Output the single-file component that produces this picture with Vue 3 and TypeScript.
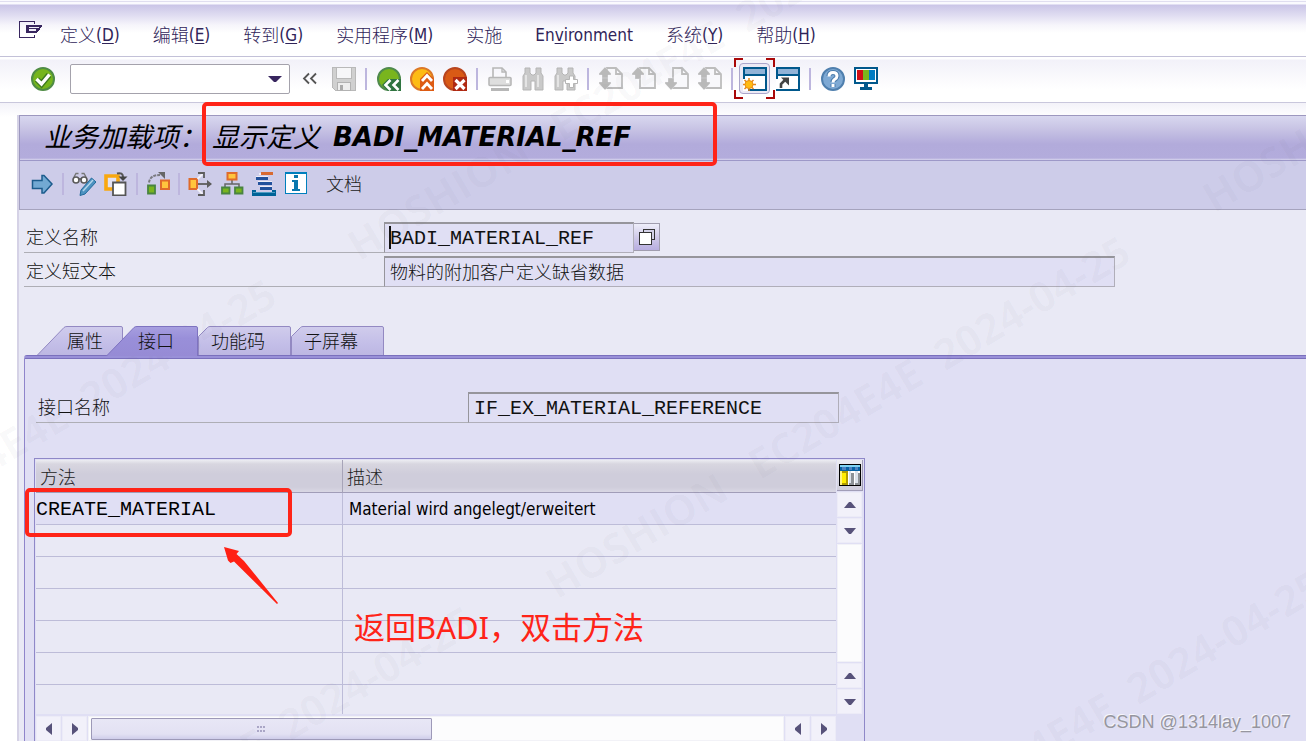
<script setup lang="ts">
interface MenuEntry { cn: string; pre?: string; key?: string; post?: string }
interface Method { name: string; text: string }
interface Stamp { x: number; y: number }

const menus: MenuEntry[] = [
  { cn: '定义', pre: '(', key: 'D', post: ')' },
  { cn: '编辑', pre: '(', key: 'E', post: ')' },
  { cn: '转到', pre: '(', key: 'G', post: ')' },
  { cn: '实用程序', pre: '(', key: 'M', post: ')' },
  { cn: '实施' },
  { cn: '', pre: 'En', key: 'v', post: 'ironment' },
  { cn: '系统', pre: '(', key: 'Y', post: ')' },
  { cn: '帮助', pre: '(', key: 'H', post: ')' },
]

const tabs = [
  { label: '属性', kind: 'first', shape: 'M0.5 30 L28 1.5 Q29 0.5 31 0.5 H85 Q86.5 0.5 86.5 2 V30' },
  { label: '接口', kind: 'active', shape: 'M0.5 30 L28 1.5 Q29 0.5 31 0.5 H90 Q91.5 0.5 91.5 2 V30' },
  { label: '功能码', kind: 'plain', shape: 'M0.5 30 V10.5 L9.5 1.5 Q10.5 0.5 12 0.5 H91 Q92.5 0.5 92.5 2 V30' },
  { label: '子屏幕', kind: 'plain', shape: 'M0.5 30 V10.5 L9.5 1.5 Q10.5 0.5 12 0.5 H91 Q92.5 0.5 92.5 2 V30' },
]

const rows: Method[] = [
  { name: 'CREATE_MATERIAL', text: 'Material wird angelegt/erweitert' },
  ...Array.from({ length: 6 }, () => ({ name: '', text: '' })),
]

const stamps: Stamp[] = [
  { x: 359, y: 262 },
  { x: 557, y: 600 },
  { x: 1214, y: 214 },
  { x: -297, y: 643 },
  { x: -98, y: 970 },
  { x: 750, y: 934 },
]
const pages = [
  { label: '第一页', up: true, down: true },
  { label: '上一页', up: true, down: false },
  { label: '下一页', up: false, down: true },
  { label: '最后一页', up: true, down: true },
]
</script>

<template>
  <div class="app">
    <nav class="menubar">
      <button class="sysmenu" aria-label="系统菜单">
        <svg width="24" height="18" viewBox="0 0 24 18" shape-rendering="crispEdges">
          <path d="M0 0H16V3H15V1H1V16H15V14H16V17H0Z" fill="#38265f" />
          <path d="M7 4H23V5L21 7V8L17 12H7Z" fill="#38265f" />
          <path d="M10 6H20V7H10ZM10 8H17V10H10Z" fill="#efeef8" />
        </svg>
      </button>
      <button v-for="m in menus" :key="m.cn" class="menu">{{ m.cn }}<span v-if="m.key" class="latin">{{ m.pre }}<u>{{ m.key }}</u>{{ m.post }}</span></button>
    </nav>

    <div class="toolbar">
      <button class="tool" aria-label="回车">
        <svg width="24" height="24" viewBox="0 0 24 24">
          <circle cx="12" cy="12" r="11" fill="#75b51d" stroke="#4f8c45" stroke-width="2" />
          <path d="M6 12.500L10.500 17L18 8" fill="none" stroke="#3d7820" stroke-width="6" />
          <path d="M5.500 12L10.500 17L18.500 7.500" fill="none" stroke="#fff" stroke-width="3.400" />
        </svg>
      </button>
      <div class="command">
        <input type="text" aria-label="命令" />
        <button aria-label="命令历史"><svg width="14" height="8" viewBox="0 0 14 8"><path d="M0 1H14L8 7H6Z" fill="#38265f" /></svg></button>
      </div>
      <button class="tool" aria-label="折叠">
        <svg width="24" height="24" viewBox="0 0 24 24" fill="none" stroke="#555" stroke-width="1.800"><path d="M10 6.500L5 11.500L10 16.500M17 6.500L12 11.500L17 16.500" /></svg>
      </button>
      <button class="tool" aria-label="保存">
        <svg width="24" height="24" viewBox="0 0 24 24" shape-rendering="crispEdges">
          <path d="M0 0H24V24H3L0 21Z" fill="#b9b9b9" /><path d="M1 1H4V12H20V1H23V23H3L1 21Z" fill="#d0d0d0" />
          <path d="M5 1H19V11H5Z" fill="#f6f6f8" /><path d="M5 15H19V24H5Z" fill="#b2b2b2" /><path d="M6 16H18V23H6Z" fill="#eee" /><path d="M8 18H11V23H8Z" fill="#aaa" />
        </svg>
      </button>
      <span class="sep"></span>
      <button class="tool" aria-label="后退">
        <svg width="24" height="24" viewBox="0 0 24 24">
          <circle cx="12" cy="12" r="11" fill="#79b51e" stroke="#4f8a4d" stroke-width="2" />
          <path d="M5 18L11 12H24V24H11Z" fill="#2f7440" />
          <path d="M13.500 13L8.500 18L13.500 23M21.500 13L16.500 18L21.500 23" fill="none" stroke="#fff" stroke-width="2.600" />
        </svg>
      </button>
      <button class="tool" aria-label="退出">
        <svg width="24" height="24" viewBox="0 0 24 24">
          <circle cx="12" cy="12" r="11" fill="#fdbb14" stroke="#dc7828" stroke-width="2" />
          <path d="M10 12L17 5L24 12V24H10Z" fill="#dd5b13" />
          <path d="M12 14L17 8.500L22 14M12 22L17 16.500L22 22" fill="none" stroke="#fff" stroke-width="2.800" />
        </svg>
      </button>
      <button class="tool" aria-label="取消">
        <svg width="24" height="24" viewBox="0 0 24 24">
          <circle cx="12" cy="12" r="11" fill="#d95a15" stroke="#b8451f" stroke-width="2" />
          <path d="M10 10H24V24H10Z" fill="#af2912" />
          <path d="M12.500 13L21.500 22M21.500 13L12.500 22" fill="none" stroke="#fff" stroke-width="3.200" />
        </svg>
      </button>
      <span class="sep"></span>
      <button class="tool" aria-label="打印" disabled>
        <svg width="24" height="24" viewBox="0 0 24 24" fill="none" stroke="#b7b7b7">
          <path d="M5 10V1H14L18 5V10" stroke-width="1.600" /><path d="M14 1V5H18" stroke-width="1.400" />
          <rect x="1" y="10.500" width="22" height="8" rx="1" fill="#dedede" stroke-width="1.600" />
          <path d="M18 13h3v3h-3z" fill="#fff" stroke="none" /><path d="M3 22.500H21" stroke-width="3" />
        </svg>
      </button>
      <button class="tool" aria-label="查找" disabled>
        <svg width="24" height="24" viewBox="0 0 24 24">
          <path d="M4 1H9V6L11 8H13L15 6V1H20V6L22 9V23H14V14H10V23H2V9L4 6Z" fill="#c9c9c9" stroke="#b5b5b5" />
          <path d="M5 8V20M17 8V20" stroke="#e4e4e4" stroke-width="2" />
        </svg>
      </button>
      <button class="tool" aria-label="查找下一个" disabled>
        <svg width="24" height="24" viewBox="0 0 24 24">
          <path d="M3 1H8V6L10 8H12L14 6V1H19V6L21 9V23H13V14H9V23H1V9L3 6Z" fill="#c9c9c9" stroke="#b5b5b5" />
          <path d="M4 8V20" stroke="#e4e4e4" stroke-width="2" />
          <path d="M15.500 9H19.500V12.500H23.500V16.500H19.500V20.500H15.500V16.500H11.500V12.500H15.500Z" fill="#fff" stroke="#b5b5b5" />
        </svg>
      </button>
      <span class="sep"></span>
      <button v-for="p in pages" :key="p.label" class="tool" :aria-label="p.label" disabled>
        <svg width="24" height="24" viewBox="0 0 24 24">
          <path d="M8 1H17L23 7V21H8Z" fill="#f8f8fb" stroke="#bdbdbd" stroke-width="1.800" />
          <path d="M17 1V7H23" fill="none" stroke="#bdbdbd" stroke-width="1.800" />
          <path v-if="p.up" d="M0 6.500L6 0L12 6.500V8H9V12H3V8H0Z" fill="#b9b9b9" stroke="#f8f8fb" stroke-width=".3" />
          <path v-if="p.down" d="M0 16.500L6 23L12 16.500V15H9V11H3V15H0Z" fill="#b9b9b9" stroke="#f8f8fb" stroke-width=".3" />
        </svg>
      </button>
      <span class="sep"></span>
      <button class="tool focus" aria-label="创建新会话">
        <svg class="corners" width="41" height="41" viewBox="0 0 41 41" fill="none" stroke="#a90808" stroke-width="2"><path d="M9 1H1V9M32 1H40V9M1 32V40H9M40 32V40H32" /></svg>
        <span class="plate">
          <svg width="24" height="24" viewBox="0 0 24 24">
            <rect x="1" y="1" width="22" height="22" fill="#fff" stroke="#00588c" stroke-width="2" /><path d="M2 2H22V7H2Z" fill="#91b3d7" /><path d="M1 8H23" stroke="#00588c" stroke-width="2" />
            <path d="M0 12H5V24H0Z" fill="#fff" /><path d="M6 11V24M0 17.500H13M1.500 13L10.500 22M10.500 13L1.500 22" stroke="#e4851b" stroke-width="1.500" /><circle cx="6" cy="17.500" r="4" fill="#ffbb13" stroke="#ea8d12" />
          </svg>
        </span>
      </button>
      <button class="tool" aria-label="创建快捷方式">
        <svg width="24" height="24" viewBox="0 0 24 24">
          <rect x="1" y="1" width="22" height="22" fill="#fff" stroke="#00588c" stroke-width="2" /><path d="M2 2H22V7H2Z" fill="#91b3d7" /><path d="M1 8H23" stroke="#00588c" stroke-width="2" />
          <path d="M0 12H4V22H0Z" fill="#fff" /><path d="M5 21V17L9 13" fill="none" stroke="#444" stroke-width="2.600" /><path d="M5 10.500H13V18.500Z" fill="#444" />
        </svg>
      </button>
      <span class="sep"></span>
      <button class="tool" aria-label="帮助">
        <svg width="24" height="24" viewBox="0 0 24 24">
          <circle cx="12" cy="12" r="11" fill="#7ea9d4" stroke="#4f7fae" stroke-width="2" />
          <path d="M8 9Q8 5.500 12 5.500T16 9Q16 11 13.500 12.500Q12 13.500 12 15M12 17V20" fill="none" stroke="#4a7bab" stroke-width="5" />
          <path d="M8 9.500Q8 5.500 12 5.500T16 9Q16 11 13.500 12.500Q12 13.500 12 15.500M12 17V20" fill="none" stroke="#fff" stroke-width="3" />
        </svg>
      </button>
      <button class="tool" aria-label="定制本地布局">
        <svg width="24" height="24" viewBox="0 0 24 24" shape-rendering="crispEdges">
          <path d="M0 0H24V17H0Z" fill="#00588c" /><path d="M2 2H22V15H2Z" fill="#fff" />
          <path d="M3 3H9V13H3Z" fill="#cf0d16" /><path d="M9 3H15V13H9Z" fill="#7ab51d" /><path d="M15 3H21V13H15Z" fill="#007cc3" />
          <path d="M10 17H14V20H18V23H6V20H10Z" fill="#00588c" />
        </svg>
      </button>
    </div>

    <div class="workspace">
      <main class="window">
        <h1 class="title">业务加载项：<span class="gap"></span>显示定义<b>BADI_MATERIAL_REF</b></h1>

        <div class="appbar">
          <button class="act" aria-label="其他对象">
            <svg width="24" height="24" viewBox="0 0 24 24"><path d="M2.500 8.500H12V3.500H14L22 12L14 21H12V16.500H2.500Z" fill="#72a9d3" stroke="#1c5c8d" stroke-width="1.500" /></svg>
          </button>
          <span class="sep"></span>
          <button class="act" aria-label="显示/更改">
            <svg width="24" height="24" viewBox="0 0 24 24" fill="none">
              <path d="M2 5L4 1.500H6.500M14 5L12 1.500H9.500" stroke="#777" stroke-width="1.400" />
              <circle cx="4" cy="8" r="3" fill="#fff" stroke="#5a5a5a" stroke-width="1.600" /><circle cx="12" cy="8" r="3" fill="#fff" stroke="#5a5a5a" stroke-width="1.600" />
              <path d="M6.500 7H9.500" stroke="#5a5a5a" stroke-width="1.600" />
              <path d="M8 23.500L9 18L19.500 6L24 10L13 22Z" fill="#4d92c0" stroke="#216b9b" /><path d="M11 19L21 8" stroke="#b3d5ea" stroke-width="1.500" />
            </svg>
          </button>
          <button class="act" aria-label="复制">
            <svg width="24" height="24" viewBox="0 0 24 24">
              <path d="M2 4H14V17H2Z" fill="#e4e2f2" stroke="#f9a80f" stroke-width="3.600" />
              <path d="M9 10.500H21.500V23.500H9Z" fill="#fff" stroke="#555" stroke-width="1.800" />
              <path d="M13 1.500Q19 0 19 5" fill="none" stroke="#555" stroke-width="2" /><path d="M14.500 4.500H23.500L19 9Z" fill="#444" />
            </svg>
          </button>
          <span class="sep"></span>
          <button class="act" aria-label="使用处">
            <svg width="24" height="24" viewBox="0 0 24 24">
              <path d="M2 13.500H9V21.500H2Z" fill="#79b51e" stroke="#498441" stroke-width="1.800" /><path d="M15 8.500H23V17H15Z" fill="#ffc53d" stroke="#df6b2b" stroke-width="2" />
              <path d="M3 10.500Q4 3 14 3" fill="none" stroke="#7a7a80" stroke-width="2" stroke-dasharray="3 1" /><path d="M12 0H19V7L17 5L15 3Z" fill="#666" />
            </svg>
          </button>
          <span class="sep"></span>
          <button class="act" aria-label="实施">
            <svg width="24" height="24" viewBox="0 0 24 24">
              <path d="M1.500 7H9V17H1.500Z" fill="#ffc53d" stroke="#df6b2b" stroke-width="2" />
              <path d="M10 12H23" stroke="#5d5d5d" stroke-width="1.800" /><path d="M19 8L24 12L19 16Z" fill="#5d5d5d" />
              <path d="M9.500 7L14.500 2M9.500 17L14.500 22" fill="none" stroke="#f2f1f8" stroke-width="2" /><path d="M10 1H16V6M10 23H16V18" fill="none" stroke="#5d5d5d" stroke-width="1.800" />
            </svg>
          </button>
          <button class="act" aria-label="层次">
            <svg width="24" height="24" viewBox="0 0 24 24">
              <path d="M12 8V12M5 16V12H19V16" fill="none" stroke="#666" stroke-width="1.500" /><path d="M7.500 1H16.500V7.500H7.500Z" fill="#ffc53d" stroke="#df6b2b" stroke-width="2" />
              <path d="M2 15.500H9.500V21.500H2ZM15 15.500H22.500V21.500H15Z" fill="#79b51e" stroke="#498441" stroke-width="1.800" />
            </svg>
          </button>
          <button class="act" aria-label="对象列表">
            <svg width="24" height="24" viewBox="0 0 24 24" shape-rendering="crispEdges">
              <path d="M7 1H9V3H7ZM4 4H16V5H4ZM6 9H20V10H6ZM8 14H20V15H8Z" fill="#efedf7" />
              <path d="M9 0H21V3H9Z" fill="#d86a32" /><path d="M4 5H16V8H4ZM6 10H20V13H6ZM8 15H20V18H8Z" fill="#23519c" />
              <path d="M0 18H4V20H20V18H24V24H0Z" fill="#006397" /><path d="M1 20H23V21H1Z" fill="#4d9cc3" />
            </svg>
          </button>
          <button class="act" aria-label="信息">
            <svg width="24" height="24" viewBox="0 0 24 24" shape-rendering="crispEdges"><path d="M1 0H23V22H1Z" fill="#007fbd" /><path d="M2 2H22V21H2Z" fill="#fff" /><path d="M10 3H14V6H10ZM8 8H14V17H16V19H8V17H10V10H8Z" fill="#0877ae" /></svg>
          </button>
          <button class="doc">文档</button>
        </div>

        <form class="content" @submit.prevent>
          <div class="field">
            <label for="def-name">定义名称</label>
            <input id="def-name" class="mono name" value="BADI_MATERIAL_REF" readonly />
            <button class="match" type="button" aria-label="搜索帮助">
              <svg width="18" height="18" viewBox="0 0 18 18" shape-rendering="crispEdges"><path d="M5.500 1.500H16.500V11.500H5.500Z" fill="#d3d1e7" stroke="#333" /><path d="M1.500 4.500H13.500V16.500H1.500Z" fill="#fff" stroke="#333" /></svg>
            </button>
            <i class="caret"></i>
          </div>
          <div class="field">
            <label for="def-text">定义短文本</label>
            <input id="def-text" class="text" value="物料的附加客户定义缺省数据" readonly />
          </div>

          <div class="tabs" role="tablist">
            <button v-for="t in tabs" :key="t.label" type="button" role="tab" :aria-selected="t.kind === 'active'" :class="['tab', t.kind]">
              <svg width="93" height="30" viewBox="0 0 93 30">
                <defs>
                  <linearGradient id="tabPlain" x1="0" y1="0" x2="0" y2="1"><stop offset="0" stop-color="#d0ccec" /><stop offset=".55" stop-color="#c4bfe8" /><stop offset="1" stop-color="#bcb6e2" /></linearGradient>
                  <linearGradient id="tabActive" x1="0" y1="0" x2="0" y2="1"><stop offset="0" stop-color="#a79fe0" /><stop offset=".4" stop-color="#998fd9" /><stop offset="1" stop-color="#968bd5" /></linearGradient>
                </defs>
                <path :d="t.shape" :class="['outline', t.kind]" />
              </svg>
              <span>{{ t.label }}</span>
            </button>
          </div>

          <section class="panel">
            <div class="field">
              <label for="if-name" class="wide">接口名称</label>
              <input id="if-name" class="mono iface" value="IF_EX_MATERIAL_REFERENCE" readonly />
            </div>

            <div class="grid">
              <div class="gridmain">
                <table>
                  <colgroup><col class="c1" /><col /></colgroup>
                  <thead><tr><th>方法</th><th>描述</th></tr></thead>
                  <tbody>
                    <tr v-for="(r, i) in rows" :key="i"><td class="mono">{{ r.name }}</td><td class="desc">{{ r.text }}</td></tr>
                  </tbody>
                </table>
                <div class="hscroll">
                  <button type="button" aria-label="向左"><svg width="8" height="12" viewBox="0 0 8 12"><path d="M7 0V12L1 7V5Z" /></svg></button>
                  <button type="button" aria-label="向右"><svg width="8" height="12" viewBox="0 0 8 12"><path d="M1 0V12L7 7V5Z" /></svg></button>
                  <div class="track">
                    <div class="thumb"><svg width="9" height="7" viewBox="0 0 9 7" shape-rendering="crispEdges"><path d="M0 0h2v2h-2zM3 0h2v2h-2zM6 0h2v2h-2zM0 4h2v2h-2zM3 4h2v2h-2zM6 4h2v2h-2z" fill="#aaa6c6" /></svg></div>
                  </div>
                  <button type="button" aria-label="向左翻页"><svg width="8" height="12" viewBox="0 0 8 12"><path d="M7 0V12L1 7V5Z" /></svg></button>
                  <button type="button" aria-label="向右翻页"><svg width="8" height="12" viewBox="0 0 8 12"><path d="M1 0V12L7 7V5Z" /></svg></button>
                </div>
              </div>
              <div class="vscroll">
                <button type="button" class="config" aria-label="表格设置">
                  <svg width="22" height="22" viewBox="0 0 22 22" shape-rendering="crispEdges">
                    <path d="M0 0H22V22H0Z" fill="#000" /><path d="M1 1H21V21H1Z" fill="#fff" /><path d="M1 1H21V3H1Z" fill="#80d3f4" /><path d="M1 3H21V7H1Z" fill="#0863a4" /><path d="M3 3H7V6H3ZM10 3H13V6H10ZM16 3H19V6H16Z" fill="#4e83c1" />
                    <path d="M1 7H9V21H1Z" fill="#b09b00" /><path d="M1 7H3V21H1Z" fill="#fff37e" /><path d="M3 9H7V19H3Z" fill="#ffed00" /><path d="M10 7H12V19H10ZM16 7H19V19H16Z" fill="#dce3eb" /><path d="M12 9H15V21H10V19H12ZM19 9H21V21H16V19H19Z" fill="#8d9296" />
                  </svg>
                </button>
                <button type="button" aria-label="向上"><svg width="14" height="8" viewBox="0 0 14 8"><path d="M1 7H13L8 1H6Z" /></svg></button>
                <button type="button" aria-label="向下"><svg width="14" height="8" viewBox="0 0 14 8"><path d="M1 1H13L8 7H6Z" /></svg></button>
                <div class="track"></div>
                <button type="button" aria-label="向上翻页"><svg width="14" height="8" viewBox="0 0 14 8"><path d="M1 7H13L8 1H6Z" /></svg></button>
                <button type="button" aria-label="向下翻页"><svg width="14" height="8" viewBox="0 0 14 8"><path d="M1 1H13L8 7H6Z" /></svg></button>
              </div>
            </div>
          </section>
        </form>
      </main>
    </div>

    <svg class="stamps" aria-hidden="true">
      <text v-for="s in stamps" :key="s.x" :transform="`translate(${s.x} ${s.y}) rotate(-30.5)`">HOSHION&nbsp;&nbsp; EC204E4E&nbsp; 2024-04-25</text>
    </svg>
    <div class="mark mark-title"></div>
    <div class="mark mark-row"></div>
    <svg class="pointer" width="56" height="60" viewBox="0 0 56 60"><path d="M0 0L15 4L12.500 7L20 14L54 56L53 57L10 14.500L6.500 16L4 13.500Z" fill="#ff2013" /></svg>
    <p class="note">返回BADI，双击方法</p>
    <p class="credit">CSDN @1314lay_1007</p>
  </div>
</template>

<style>
body {
  margin: 0;
}
</style>

<style scoped>
.app {
  position: relative;
  display: flex;
  flex-direction: column;
  height: 100vh;
  overflow: hidden;
  box-sizing: border-box;
  background: #fff;
  color: #111;
  font: 18px/24px "Noto Sans", "Noto Sans CJK SC", sans-serif;
}
.app *, .app *::before { box-sizing: border-box; }
button, input { font: inherit; color: inherit; margin: 0; padding: 0; border: 0; background: none; border-radius: 0; outline: 0; }
button { display: flex; align-items: center; justify-content: center; white-space: pre; }
svg { display: block; flex: none; }

.menubar {
  display: flex;
  align-items: center;
  gap: 33px;
  flex: none;
  height: 57px;
  padding: 12px 0 0 19px;
  border-top: 1px solid #fafafe;
  border-bottom: 1px solid #c3c1d8;
  background: linear-gradient(#e0def0 0 1px, #fafafe 1px 3px, #cac5e7 4px, #dfdcf1 14px, #f6f5fb 24px, #fff 32px);
  color: #302459;
}
.sysmenu { margin: -10px -16px 0 0; }
.menu { font-weight: 300; }
.latin { font: 400 17px/24px "DejaVu Sans Condensed", "DejaVu Sans", sans-serif; }
u { text-underline-offset: 2px; }

.toolbar {
  display: flex;
  align-items: center;
  flex: none;
  height: 46px;
  padding: 0 0 2px 26px;
  border-bottom: 1px solid #c9c7dc;
  background: linear-gradient(#fff 0 2px, #f2f1f9 3px, #fff 32px);
}
.tool { position: relative; width: 33px; height: 33px; }
.sep { width: 12px; height: 22px; display: flex; justify-content: center; }
.sep::before { content: ""; width: 2px; background: #bdb6de; }
.command { display: flex; width: 220px; height: 30px; margin: 1px 4px 0 11px; border: 1px solid #a4a2ac; border-radius: 2px; background: #fff; }
.command input { flex: 1; min-width: 0; padding: 0 6px; }
.command button { width: 29px; }
.plate { display: flex; align-items: center; justify-content: center; width: 31px; height: 31px; flex: none; border: 1px solid #aaa6cb; border-radius: 4px; background: #eceaf5; }
.corners { position: absolute; left: -4px; top: -4px; }

.workspace {
  display: flex;
  flex: 1;
  min-height: 0;
  padding: 12px 0 0 17px;
  background: linear-gradient(#f3f2f9, #fff 14px);
}
.window {
  display: flex;
  flex-direction: column;
  flex: 1;
  min-width: 0;
  border-left: 2px solid #d5d2e6;
  background: #e9e9f5;
}
.title {
  display: flex;
  align-items: center;
  flex: none;
  height: 46px;
  margin: 0;
  padding: 0 0 2px 24px;
  border: 1px solid #9d98bf;
  border-right: 0;
  border-bottom-color: #9d98c8;
  background: linear-gradient(#d8d7ef, #c9c5e5 12px, #b2abdb 28px, #b3acdc 42px, #d8d6ee 44px);
  color: #000;
  font: italic 400 27px/32px "Noto Sans", "Noto Sans CJK SC", sans-serif;
  white-space: pre;
}
.title b { margin-left: 13px; font: italic 700 26px/32px "DejaVu Sans", sans-serif; }
.gap { width: 6px; }
.appbar {
  display: flex;
  align-items: center;
  flex: none;
  height: 49px;
  padding: 0 0 2px 6px;
  border-left: 1px solid #a5a1c3;
  border-bottom: 1px solid #a5a3bd;
  background: #cdcce9;
}
.act { width: 32px; height: 32px; }
.appbar .sep { width: 10px; }
.doc { margin-left: 14px; color: #222; font-weight: 300; }

.content { display: flex; flex-direction: column; flex: 1; min-height: 0; padding: 12px 0 0 5px; }
.field { position: relative; display: flex; height: 31px; margin-bottom: 3px; font-weight: 300; }
.field label { width: 360px; padding: 3px 2px 0; border-bottom: 1px solid #aeaeb5; }
.field input { padding: 0 5px; border: 1px solid #b0aeb9; border-top: 2px solid #96959b; border-left-color: #96959b; background: #e0dff4; }
.mono, .field .mono { font-family: "Liberation Mono", monospace; font-size: 20px; font-weight: 400; }
.field .mono { padding: 2px 5px 0; }
.field .name { width: 250px; }
.field .text { width: 731px; }
.field label.wide { width: 432px; }
.field .iface { width: 371px; }
.match { width: 26px; height: 28px; margin-top: 1px; border: 1px solid #a09dae; border-left: 0; background: linear-gradient(#eeeefa, #d0cae9 50%, #b8aee0); }
.caret { position: absolute; left: 365px; top: 4px; width: 2px; height: 23px; background: #111; }

.tabs { display: flex; height: 29px; margin: 36px 0 0 12px; flex: none; }
.tab { position: relative; width: 93px; justify-content: flex-start; padding: 1px 0 0 13px; font-weight: 300; }
.tab.first { width: 87px; padding-left: 31px; }
.tab.active { width: 92px; margin-left: -17px; padding-left: 32px; z-index: 1; }
.tab svg { position: absolute; left: 0; top: 0; }
.tab span { position: relative; }
.outline { fill: url(#tabPlain); stroke: #9389c2; }
.outline.active { fill: url(#tabActive); stroke: #7e73c0; }

.panel {
  flex: 1;
  min-height: 0;
  display: flex;
  flex-direction: column;
  padding: 33px 0 0 11px;
  border-top: 4px double #7a70bd;
  border-left: 1px solid #8f85cb;
  border-top-left-radius: 3px;
  background: #e0dff4;
  position: relative;
}
.panel::before { content: ""; position: absolute; left: 0; right: 0; top: -3px; height: 2px; background: #9990d8; }
.panel .field { margin: 0; flex: none; }
.grid {
  display: flex;
  flex: 1 0 auto;
  width: 831px;
  margin: 35px 0 0 -2px;
  padding: 1px 1px 0;
  border: 1px solid #8f88c8;
  border-bottom: 0;
}
.gridmain { width: 800px; }
table { width: 100%; table-layout: fixed; border-collapse: separate; border-spacing: 0; }
.c1 { width: 307px; }
th {
  height: 33px;
  padding: 2px 4px 0;
  border-right: 1px solid #a7a4b8;
  border-bottom: 1px solid #a19db8;
  background: linear-gradient(#ececf2, #d8d6e0 4px, #cfcddb 14px, #cfcddb 27px, #d9d7e4);
  text-align: left;
  font-weight: 300;
  color: #222;
}
td { height: 32px; padding: 0; border-bottom: 1px solid #bdbcd8; border-right: 1px solid #bdbcd8; background: #e9e9f5; white-space: nowrap; }
th:last-child, td:last-child { border-right: 0; }
tr:first-child td { background: #e0dff4; }
tbody tr:last-child td { height: 29px; border-bottom: 0; }
td.desc { padding-left: 6px; font-family: "DejaVu Sans Condensed", "DejaVu Sans", sans-serif; font-size: 17px; color: #000; }
td.mono { padding-top: 3px; color: #000; }

.hscroll { display: flex; gap: 1px; height: 25px; margin-top: 2px; }
.hscroll button, .vscroll button { width: 25px; height: 25px; flex: none; background: #f2f1fa; border: 1px solid #ecebf7; fill: #57527a; }
.track { flex: 1; background: #fcfcfd; border: 1px solid #f2f2f7; }
.hscroll .track { padding: 1px 2px; }
.thumb { display: flex; align-items: center; justify-content: center; width: 341px; height: 22px; border: 1px solid #9d99b8; border-radius: 1px; background: linear-gradient(#e8e7f6, #e3e1f3 75%, #cfcdea); }
.vscroll { display: flex; flex-direction: column; gap: 1px; width: 26px; height: 254px; margin-left: 1px; }
.vscroll .track { width: 25px; }
.vscroll .config { width: 26px; height: 31px; background: linear-gradient(#ececf2, #cfcddb); border: 0; border-right: 1px solid #a19db8; border-bottom: 1px solid #a19db8; }

.stamps { position: absolute; inset: 0; width: 100%; height: 100%; pointer-events: none; fill: rgba(90, 90, 110, .03); font: 700 42px "Open Sans", "Noto Sans", sans-serif; }
.mark { position: absolute; border: 4px solid #ff2418; border-radius: 5px; pointer-events: none; }
.mark-title { left: 202px; top: 102px; width: 515px; height: 64px; }
.mark-row { left: 25px; top: 488px; width: 267px; height: 49px; }
.pointer { position: absolute; left: 224px; top: 547px; }
.note { position: absolute; left: 354px; top: 606px; margin: 0; font-size: 31px; line-height: 42px; color: #ff2418; white-space: nowrap; }
.credit { position: absolute; right: 15px; bottom: 8px; margin: 0; font: 18px/22px "Liberation Sans", sans-serif; color: #96969f; text-shadow: -1px -1px 0 #f6f6fc; }
</style>
